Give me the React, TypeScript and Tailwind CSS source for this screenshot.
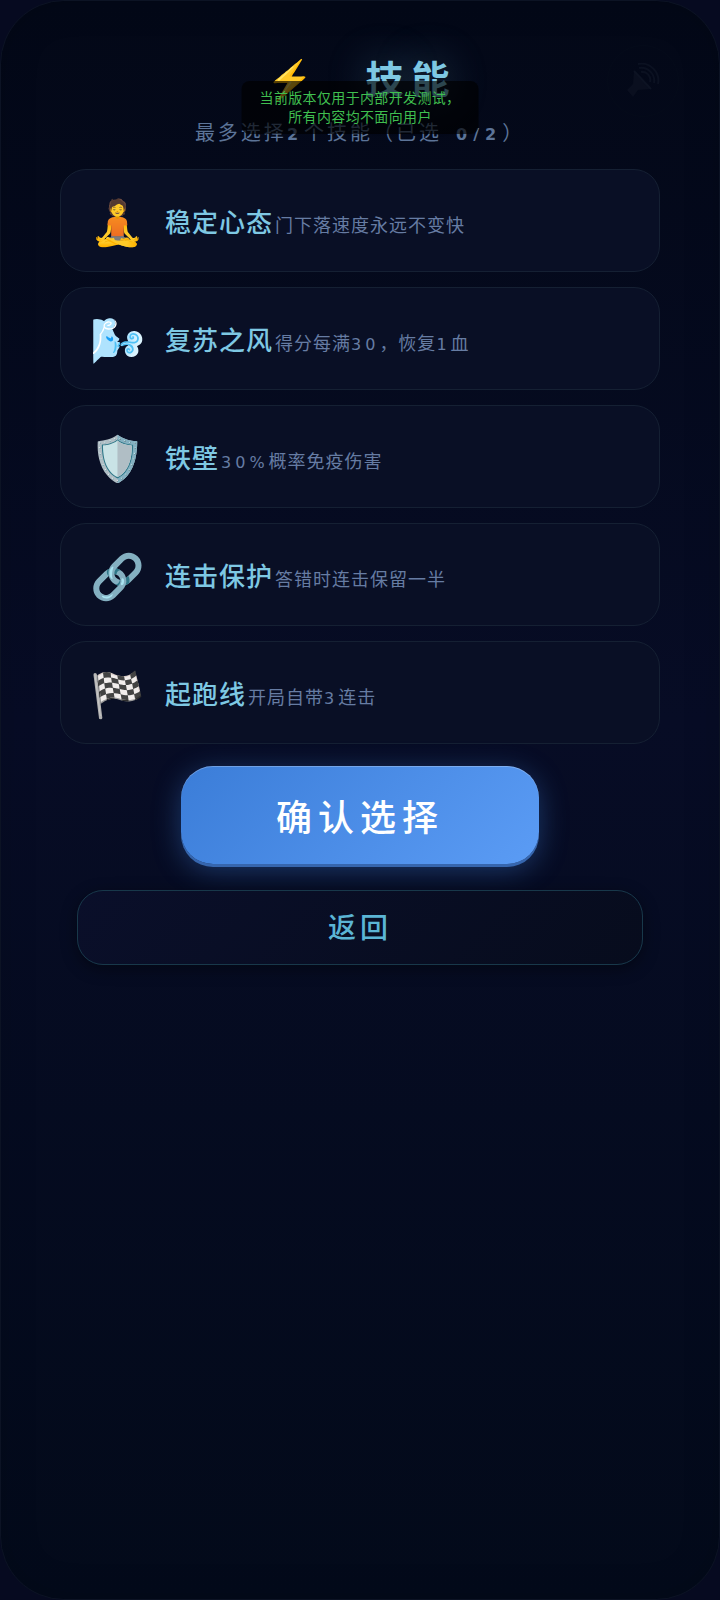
import { useState } from "react";

const skills = [
  { icon: "🧘", name: "稳定心态", desc: "门下落速度永远不变快" },
  { icon: "🌬️", name: "复苏之风", desc: "得分每满30，恢复1血" },
  { icon: "🛡️", name: "铁壁", desc: "30%概率免疫伤害" },
  { icon: "🔗", name: "连击保护", desc: "答错时连击保留一半" },
  { icon: "🏁", name: "起跑线", desc: "开局自带3连击" },
];

const MAX_SKILLS = 2;

// Digits are set in a wide face, Chinese text stays in the body font.
function MixedText({ text, digits }: { text: string; digits: string }) {
  return (
    <>
      {text.split(/([0-9/%\u2002]+)/).map((part, i) =>
        i % 2 ? (
          <span key={i} className={digits}>
            {part}
          </span>
        ) : (
          part
        )
      )}
    </>
  );
}

function SpeakerIcon() {
  return (
    <svg viewBox="0 0 36 36" className="h-9 w-9" fill="none" aria-hidden="true">
      <path d="M2 27l6-6 1-13 17 18-13 1-5 7z" fill="#0a0f1f" />
      <path d="M9 8l17 18" stroke="#0d1323" strokeWidth="2" />
      <path d="M16 9a8 8 0 0 1 9 10M14 5a13 13 0 0 1 15 15M13 1a17 17 0 0 1 20 20" stroke="#0b1121" strokeWidth="2" />
    </svg>
  );
}

export default function App() {
  const [picked, setPicked] = useState<string[]>([]);

  const toggle = (name: string) => {
    if (picked.includes(name)) {
      setPicked(picked.filter((n) => n !== name));
    } else if (picked.length < MAX_SKILLS) {
      setPicked([...picked, name]);
    }
  };

  return (
    <div className="min-h-screen bg-[#060a20] font-['Noto_Sans_CJK_SC',sans-serif]">
      <main className="relative min-h-screen rounded-[64px] border border-[#0c1324] bg-linear-to-b from-[#030817] via-[#070c25] via-45% to-[#030a1a] px-[59px] pt-[47px] shadow-[inset_0_0_40px_rgba(0,0,0,0.1)]">
        <button
          type="button"
          aria-label="声音"
          className="absolute top-11 right-10 flex h-[72px] w-[72px] items-center justify-center rounded-full border border-[#050b1a]"
        >
          <SpeakerIcon />
        </button>

        <h1 className="flex h-14 items-center justify-center gap-[52px] pl-1 text-[38px] font-bold text-[#7ec8e3]">
          <span>⚡</span>
          <span className="tracking-[8px] [text-shadow:0_0_40px_rgba(126,200,227,0.35)]">技能</span>
        </h1>
        <p className="mt-3 text-center text-[20px] leading-8 tracking-[3px] text-[#5c7498]">
          <MixedText
            text={`最多选择${MAX_SKILLS}个技能（已选\u2002${picked.length}/${MAX_SKILLS}）`}
            digits="font-['DejaVu_Sans'] text-[16px] font-bold tracking-[6px]"
          />
        </p>

        <div className="absolute top-20 left-1/2 -translate-x-1/2 rounded-lg bg-black/65 px-[18px] pt-[7px] pb-2 text-center text-[14px] leading-[19px] tracking-wide whitespace-nowrap text-[#3fbf4f]">
          当前版本仅用于内部开发测试，
          <br />
          所有内容均不面向用户
        </div>

        <div className="mt-[18px] flex flex-col gap-[15px]">
          {skills.map((skill) => (
            <button
              key={skill.name}
              type="button"
              aria-pressed={picked.includes(skill.name)}
              onClick={() => toggle(skill.name)}
              className="flex h-[103px] items-center gap-[22px] rounded-[26px] border border-[#152033] bg-[#090f25] px-[30px] text-left aria-pressed:border-[#4fa8d0]"
            >
              <span className="flex w-[52px] justify-center pb-1 text-[44px] leading-none">{skill.icon}</span>
              <span className="text-[18px] tracking-[1px] text-[#667ca3]">
                <strong className="mr-0.5 text-[26px] font-medium tracking-[1px] text-[#7ec8e3]">{skill.name}</strong>
                <MixedText text={skill.desc} digits="font-['DejaVu_Sans'] text-[16px] tracking-[4px]" />
              </span>
            </button>
          ))}
        </div>

        <div className="mt-[22px] flex flex-col">
          <button
            type="button"
            className="h-[98px] self-center rounded-[32px] bg-linear-135 from-[#3b7dd8] to-[#5b9cf5] px-[95px] text-[36px] font-medium tracking-[6px] text-white shadow-[0_3px_0_#3666ae,0_6px_28px_rgba(59,125,216,0.4),inset_0_1px_0_rgba(255,255,255,0.25)]"
          >
            确认选择
          </button>
          <button
            type="button"
            className="mx-[17px] mt-[26px] h-[75px] rounded-[26px] border border-[#18384a] bg-linear-135 from-[#0a0f2a] to-[#070c1d] pb-1 text-[28px] font-medium tracking-[4px] text-[#5bb5d5] shadow-[0_4px_16px_rgba(0,0,0,0.4)]"
          >
            返回
          </button>
        </div>
      </main>
    </div>
  );
}
